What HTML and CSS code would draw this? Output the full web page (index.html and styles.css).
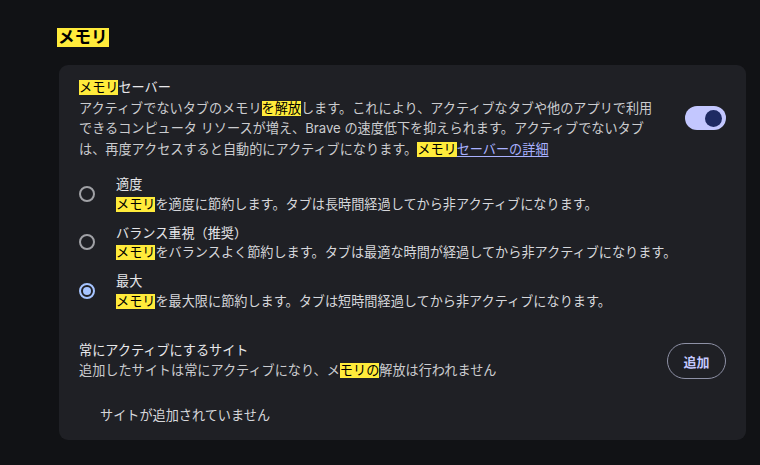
FILE: index.html
```html
<!DOCTYPE html>
<html lang="ja">
<head>
<meta charset="utf-8">
<link rel="stylesheet" href="styles.css">
</head>
<body>
<div class="page">
  <h2 class="section-title"><mark class="hl hl-title">メモリ</mark></h2>
  <div class="card">
    <div class="saver">
      <div class="saver-text">
        <div class="primary"><mark class="hl">メモリ</mark>セーバー</div>
        <div class="secondary">アクティブでないタブのメモリ<mark class="hl">を解放</mark>します。これにより、アクティブなタブや他のアプリで利用<br>できるコンピュータ リソースが増え、Brave の速度低下を抑えられます。アクティブでないタブ<br>は、再度アクセスすると自動的にアクティブになります。<a class="link" href="#"><mark class="hl">メモリ</mark>セーバーの詳細</a></div>
      </div>
      <div class="toggle"><span class="knob"></span></div>
    </div>

    <div class="radios">
      <div class="option">
        <span class="radio"></span>
        <div class="option-text">
          <div class="option-label">適度</div>
          <div class="option-desc"><mark class="hl">メモリ</mark>を適度に節約します。タブは長時間経過してから非アクティブになります。</div>
        </div>
      </div>
      <div class="option">
        <span class="radio"></span>
        <div class="option-text">
          <div class="option-label">バランス重視（推奨）</div>
          <div class="option-desc"><mark class="hl">メモリ</mark>をバランスよく節約します。タブは最適な時間が経過してから非アクティブになります。</div>
        </div>
      </div>
      <div class="option">
        <span class="radio checked"></span>
        <div class="option-text">
          <div class="option-label">最大</div>
          <div class="option-desc"><mark class="hl">メモリ</mark>を最大限に節約します。タブは短時間経過してから非アクティブになります。</div>
        </div>
      </div>
    </div>

    <div class="sites">
      <div class="sites-text">
        <div class="primary">常にアクティブにするサイト</div>
        <div class="secondary">追加したサイトは常にアクティブになり、メ<mark class="hl">モリの</mark>解放は行われません</div>
      </div>
      <button class="add-btn">追加</button>
    </div>
    <div class="empty">サイトが追加されていません</div>
  </div>
</div>
</body>
</html>
```

FILE: styles.css
```css
* { box-sizing: border-box; }

html, body {
  margin: 0;
  padding: 0;
  background: #111215;
}

body {
  font-family: "Inter", "Noto Sans CJK JP", sans-serif;
  font-size: 13.15px;
  color: #e3e3e6;
  width: 760px;
  height: 465px;
  overflow: hidden;
}

.page {
  padding: 28px 14px 0 59px;
}

.section-title {
  margin: 0 0 18px -2px;
  font-size: 16.5px;
  font-weight: 700;
  line-height: 19px;
  height: 19px;
}

.hl {
  background: #ffeb3b;
  color: #000;
  display: inline-block;
  line-height: 15px;
}

.hl-title {
  line-height: 19px;
  padding: 0 1px;
}

.card {
  background: #1f2025;
  border-radius: 9px;
  padding: 12px 20px 15px 20px;
  width: 687px;
}

.saver {
  display: flex;
  align-items: center;
  justify-content: space-between;
}

.primary {
  color: #e8e8eb;
  line-height: 20.5px;
}

.secondary {
  color: #cbcccf;
  line-height: 20.5px;
}

.sites .primary,
.sites .secondary {
  line-height: 20px;
}

.link {
  color: #a9b1ff;
  text-decoration: underline;
  text-underline-offset: 2px;
}

.toggle {
  width: 41px;
  height: 24px;
  border-radius: 12px;
  background: #c3c7ff;
  display: flex;
  align-items: center;
  justify-content: flex-end;
  padding-right: 4px;
  flex-shrink: 0;
}

.knob {
  width: 17px;
  height: 17px;
  border-radius: 50%;
  background: #1e2a62;
}

.radios {
  margin-top: 16px;
  display: flex;
  flex-direction: column;
  gap: 9.5px;
}

.option {
  display: flex;
  align-items: center;
  gap: 21px;
}

.radio {
  width: 16px;
  height: 16px;
  border-radius: 50%;
  border: 2px solid #a0a1a6;
  flex-shrink: 0;
  margin-top: -2px;
  display: flex;
  align-items: center;
  justify-content: center;
}

.radio.checked {
  border-color: #a6c4ff;
}

.radio.checked::after {
  content: "";
  width: 8px;
  height: 8px;
  border-radius: 50%;
  background: #a6c4ff;
}

.option-label,
.option-desc {
  line-height: 19.5px;
  color: #d6d7db;
}

.option-label {
  color: #e6e6e9;
}

.sites {
  margin-top: 29px;
  display: flex;
  align-items: center;
  justify-content: space-between;
}

.add-btn {
  font-family: "Inter", "Noto Sans CJK JP", sans-serif;
  font-size: 13px;
  font-weight: 700;
  color: #c4c8ff;
  background: transparent;
  border: 1px solid #8e91a6;
  border-radius: 18px;
  width: 59px;
  height: 36px;
  padding: 0;
  margin-top: 2px;
}

.empty {
  margin-top: 25px;
  padding-left: 21px;
  line-height: 20px;
  color: #d6d7db;
}
```
